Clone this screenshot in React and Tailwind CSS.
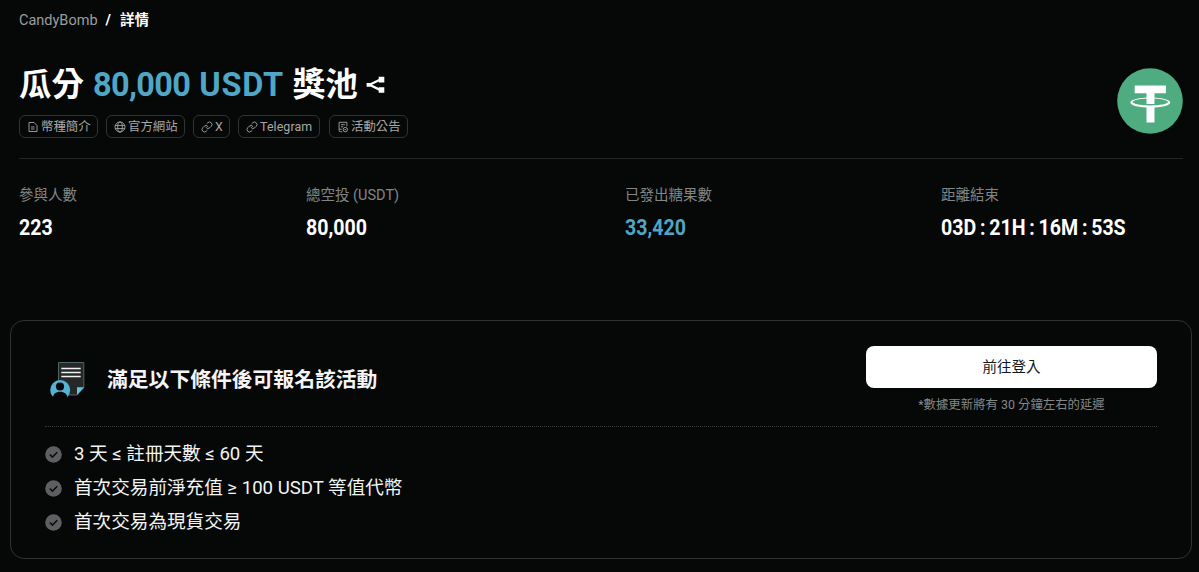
import { Link } from "lucide-react";

const tagIcons = {
  doc: (
    <>
      <path d="M2 1.5h5l3 3v6H2z" />
      <path d="M4 6h3.5M4 8h3.5" />
    </>
  ),
  globe: (
    <>
      <circle cx="6" cy="6" r="5" />
      <ellipse cx="6" cy="6" rx="2.3" ry="5" />
      <path d="M1.2 4.4h9.6M1.2 7.6h9.6" />
    </>
  ),
  notice: (
    <>
      <path d="M5.2 10.7H3.4a1.3 1.3 0 0 1-1.3-1.3V1.3h7.8v4" />
      <path d="M2.1 8.2h2.6M4 3.7h4M4 5.8h2.2" />
      <circle cx="8.3" cy="8.6" r="2.2" />
      <path d="M7.4 8.6h1.8" />
    </>
  ),
};

function Tag({ icon, label, className }) {
  return (
    <div className={`flex h-[23px] shrink-0 items-center gap-[2px] rounded-[6px] border border-[#303232] pl-[7px] text-[12.4px] text-[#a6a8a8] ${className}`}>
      {icon === "link" ? (
        <Link className="size-[12px] shrink-0" strokeWidth={1.8} />
      ) : (
        <svg className="size-[12px] shrink-0" viewBox="0 0 12 12" fill="none" stroke="currentColor" strokeWidth="0.9">
          {tagIcons[icon]}
        </svg>
      )}
      <span className="pt-px whitespace-nowrap">{label}</span>
    </div>
  );
}

function Stat({ label, value, className = "", valueClass = "text-white" }) {
  return (
    <div className={className}>
      <div className="text-[14.5px] leading-[20px] text-[#828585]">{label}</div>
      <div className={`mt-[8px] origin-left scale-x-[0.91] text-[21.5px] leading-[28px] font-bold [word-spacing:-1.2px] whitespace-nowrap ${valueClass}`}>
        {value}
      </div>
    </div>
  );
}

function Requirement({ children }) {
  return (
    <li className="flex h-[34px] items-center gap-[12px] text-[18.6px] whitespace-nowrap text-[#f3f4f4]">
      <svg className="size-[17px] shrink-0" viewBox="0 0 17 17">
        <circle cx="8.5" cy="8.5" r="8.3" fill="#5d5f61" />
        <path d="M4.8 8.5l2.6 2.6 4.9-4.8" fill="none" stroke="#0b0d0c" strokeWidth="1.5" />
      </svg>
      <span className="pt-[2px]">{children}</span>
    </li>
  );
}

function TetherLogo() {
  return (
    <svg className="size-[66px] shrink-0" viewBox="0 0 66 66">
      <circle cx="33" cy="33" r="32.8" fill="#4fac80" />
      <path d="M17.7 17.5h31.2v7.7H37.5V36h-8V25.2H17.7z" fill="#fff" />
      <path d="M29.5 38h8v16.5h-8z" fill="#fff" />
      <path
        fillRule="evenodd"
        d="M33.3 29.4c11 0 20 2.2 20 5s-9 5.2-20 5.2-20-2.4-20-5.2 9-5 20-5zm0 1c-9.6 0-17.6 1.6-17.6 3.6 0 1.9 8 3.4 17.6 3.4s17.6-1.5 17.6-3.4c0-2-8-3.6-17.6-3.6z"
        fill="#fff"
      />
    </svg>
  );
}

function FormIcon() {
  return (
    <svg className="h-[38px] w-[36px] shrink-0" viewBox="0 0 36 38">
      <path d="M8.5 1.5h25.3v25.3l-7 7.2H8.5z" fill="#242829" stroke="#526563" strokeWidth="1" />
      <path d="M11.3 7.5h19.4M11.3 11.5h19.4M11.3 15.5h19.4" stroke="#f2f1f2" strokeWidth="1.4" />
      <path d="M27 26.3h7l-7 7.7z" fill="#62c4dc" />
      <circle cx="10.2" cy="29" r="10" fill="#54b2d2" />
      <circle cx="10" cy="25.5" r="4.1" fill="#060807" />
      <path d="M3 39v-2c0-4 2.9-6.2 7.1-6.2s7.2 2.2 7.2 6.2v2z" fill="#060807" />
    </svg>
  );
}

export default function App() {
  return (
    <main className="h-[572px] w-[1199px] overflow-hidden bg-[#060807] font-[Roboto,'Noto_Sans_CJK_TC',sans-serif]">
      <header className="pr-[16px] pl-[19px]">
        <nav className="flex h-[40px] items-center pt-[2px] text-[14.5px]">
          <span className="text-[#9b9d9d]">CandyBomb</span>
          <span className="ml-[8px] font-bold text-white">/</span>
          <span className="ml-[9px] font-bold text-white">詳情</span>
        </nav>
        <div className="flex h-[119px] items-start justify-between border-b border-[#242626]">
          <div>
            <h1 className="mt-[20px] flex h-[48px] items-center pt-[2px] text-[32.5px] font-bold whitespace-nowrap text-white">
              <span>瓜分</span>
              <span className="ml-[9px] tracking-[-0.65px] text-[#50a6c5]">80,000</span>
              <span className="ml-[9px] tracking-[0.7px] text-[#50a6c5]">USDT</span>
              <span className="ml-[9px]">獎池</span>
              <svg className="ml-[8px] h-[18px] w-[19px]" viewBox="0 0 19 18">
                <path d="M15.5 3L3.5 8.8l12 5.8" fill="none" stroke="#fff" strokeWidth="2.3" />
                <path d="M12.7.8h5.6v5.6h-5.6zM12.7 11.2h5.6v5.6h-5.6zM.6 6.9h3.8v3.9H.6z" fill="#fff" />
              </svg>
            </h1>
            <div className="mt-[7px] flex">
              <Tag icon="doc" label="幣種簡介" className="w-[79px]" />
              <Tag icon="globe" label="官方網站" className="ml-[8px] w-[79px]" />
              <Tag icon="link" label="X" className="ml-[8px] w-[37px]" />
              <Tag icon="link" label="Telegram" className="ml-[8px] w-[82px] tracking-[0.1px]" />
              <Tag icon="notice" label="活動公告" className="ml-[9px] w-[79px]" />
            </div>
          </div>
          <div className="mt-[27.5px]">
            <TetherLogo />
          </div>
        </div>
      </header>

      <section className="flex h-[161px] pt-[27px] pl-[19px]">
        <Stat className="w-[287px]" label="參與人數" value="223" />
        <Stat className="w-[319px]" label="總空投 (USDT)" value="80,000" />
        <Stat className="w-[316px]" label="已發出糖果數" value="33,420" valueClass="text-[#50a6c5]" />
        <Stat label="距離結束" value="03D : 21H : 16M : 53S" />
      </section>

      <section className="ml-[10px] h-[239px] w-[1182px] rounded-[14px] border border-[#303232] pr-[34px] pl-[34px]">
        <div className="flex h-[106px] justify-between border-b border-dotted border-[#383a3a]">
          <div className="flex items-center gap-[21px] pt-[13px] pl-[5px]">
            <FormIcon />
            <h2 className="pt-px text-[20.8px] font-bold text-[#f4f4f6]">滿足以下條件後可報名該活動</h2>
          </div>
          <div className="w-[291px] pt-[25px]">
            <button className="h-[42px] w-full rounded-[8px] bg-white pt-px text-[14.5px] text-[#151717]">前往登入</button>
            <p className="mt-[7px] text-center text-[12.4px] leading-[20px] text-[#858787]">*數據更新將有 30 分鐘左右的延遲</p>
          </div>
        </div>
        <ul className="pt-[10px]">
          <Requirement>3 天 ≤ 註冊天數 ≤ 60 天</Requirement>
          <Requirement>首次交易前淨充值 ≥ 100 USDT 等值代幣</Requirement>
          <Requirement>首次交易為現貨交易</Requirement>
        </ul>
      </section>
    </main>
  );
}
